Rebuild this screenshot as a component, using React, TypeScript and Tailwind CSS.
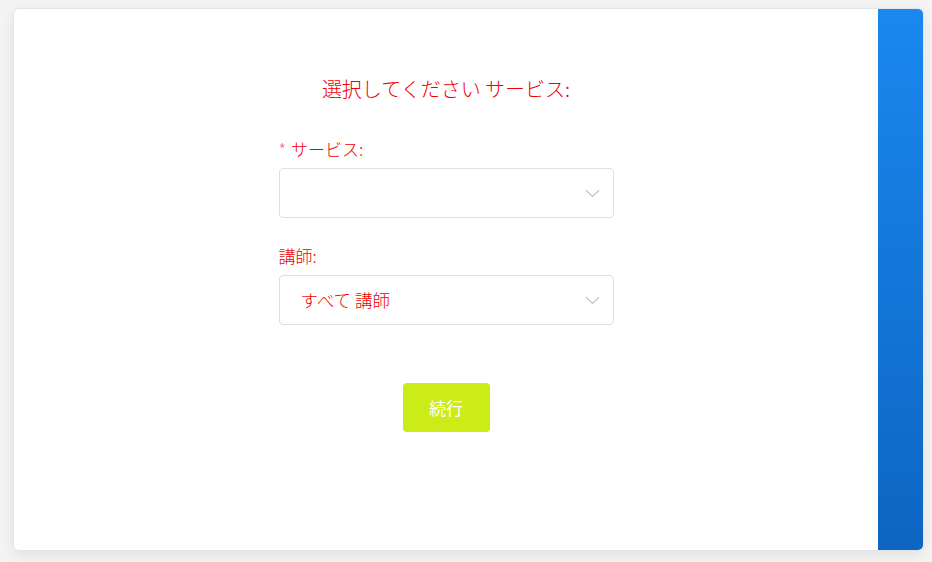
import React from 'react';

const jp = { fontFamily: '"Noto Sans CJK JP", "Noto Sans", sans-serif' };

const Chevron: React.FC = () => (
  <svg width="15" height="9" viewBox="0 0 15 9" fill="none" className="text-[#c0c4cc]">
    <path d="M1 1.2 L7.5 7.5 L14 1.2" stroke="currentColor" strokeWidth="1.2" />
  </svg>
);

const SelectBox: React.FC<{ value?: string }> = ({ value }) => (
  <div className="h-[50px] w-full rounded border border-[#dcdfe6] bg-white flex items-center justify-between pl-[21px] pr-[13px]">
    <span className="text-[17.5px] font-light text-[#f00000]">{value ?? ''}</span>
    <Chevron />
  </div>
);

const App: React.FC = () => {
  return (
    <div className="w-[932px] h-[562px] bg-[#f4f4f5] pt-[8px] pl-[13px]" style={jp}>
      <div className="w-[911px] h-[543px] flex rounded-md border border-[#e4e4ec] bg-white shadow-[0_4px_14px_rgba(0,0,0,0.08)] overflow-hidden">
        {/* Form */}
        <div className="flex-1 flex flex-col items-center pt-[65px]">
          <h2 className="text-[20px] font-light text-[#f00000] leading-[30px]">選択してください サービス:</h2>

          <div className="w-[335px] mt-[32px]">
            <label className="block text-[17px] font-light text-[#f00000] leading-[26px] mb-[6px]">
              <span className="text-[#f56c6c] mr-[5px]">*</span>サービス:
            </label>
            <SelectBox />

            <label className="block text-[17px] font-light text-[#f00000] leading-[26px] mt-[25px] mb-[6px]">
              講師:
            </label>
            <SelectBox value="すべて 講師" />
          </div>

          <button className="mt-[58px] h-[49px] w-[87px] rounded bg-[#cbec16] text-white text-[17px]">
            続行
          </button>
        </div>

        {/* Side panel */}
        <div className="w-[45px] bg-gradient-to-b from-[#1a88f0] to-[#0d65c1]" />
      </div>
    </div>
  );
};

export default App;
